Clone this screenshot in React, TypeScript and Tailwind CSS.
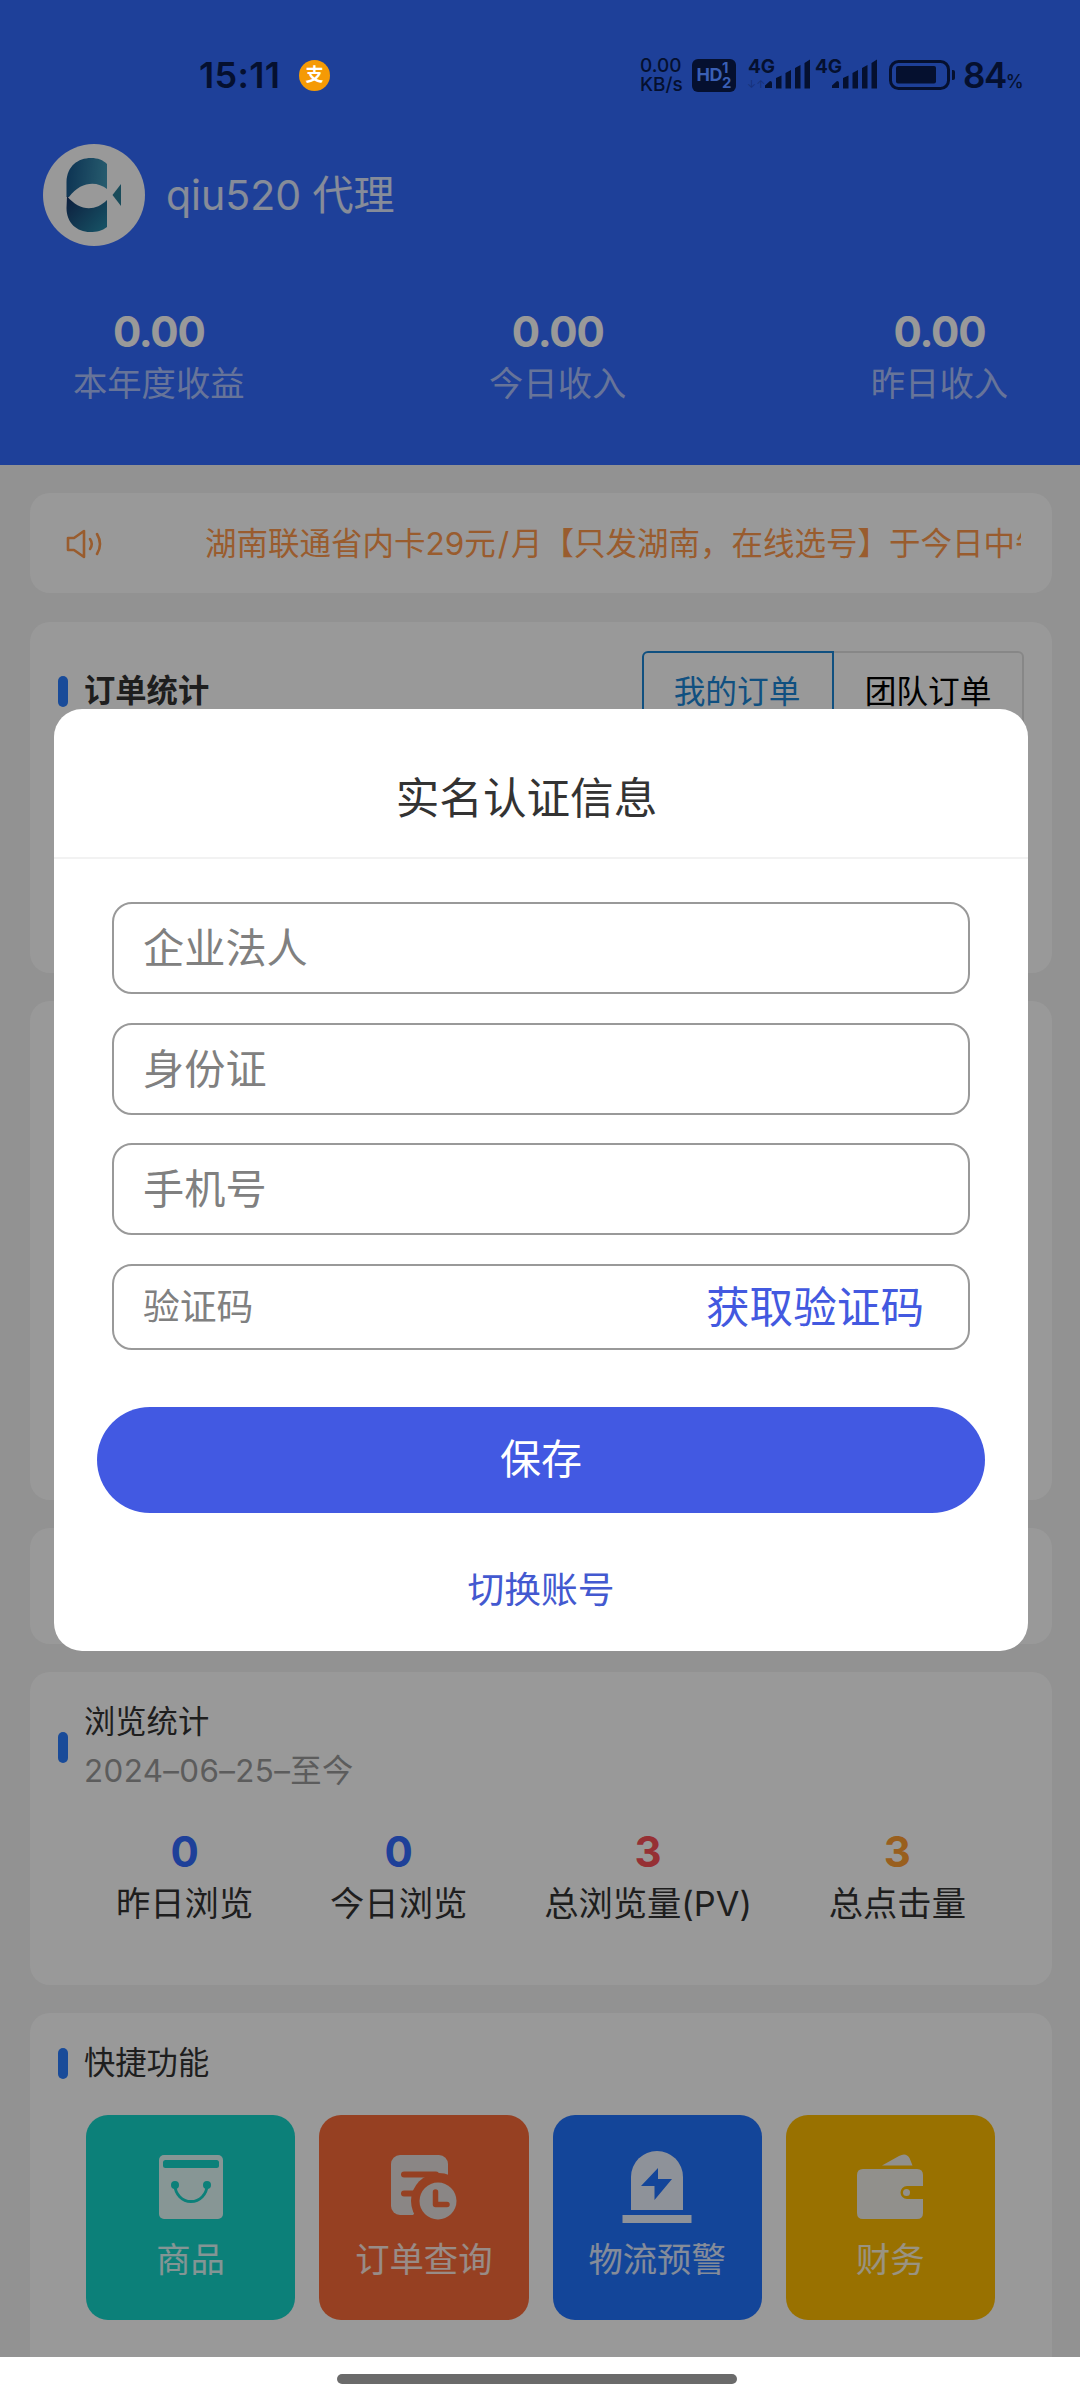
import { ReactNode } from 'react'

const Signal = () => (
  <svg width="48" height="30" viewBox="0 0 48 30" fill="currentColor">
    <path d="M1 29v-2.500l5-4.500q2 0 2 2v5z" />
    <path d="M12 29.500V19l5.500-2.500v13zM21.500 29.500V14l5.500-3v18.500zM31 29.500V9l5.500-3v23.500zM40.500 29.500V4l5.500-3.500v29z" />
  </svg>
)

const StatusBar = () => (
  <div className="absolute left-0 top-0 z-30 flex h-[150px] w-full items-center justify-between pl-[199px] pr-[56px] text-[#05102f]">
    <div className="flex items-center">
      <span className="w-[100px] text-[36px] font-semibold leading-none tracking-[0.3px]">15:11</span>
      <div className="flex h-[31px] w-[31px] items-center justify-center rounded-full bg-[#f59a05] text-[18px] font-bold leading-none text-white">支</div>
    </div>
    <div className="flex items-center">
      <div className="flex w-[52px] flex-col text-[19px] font-medium leading-[19px]">
        <span>0.00</span>
        <span>KB/s</span>
      </div>
      <div className="flex h-[33px] w-[44px] items-center justify-center rounded-[6px] bg-[#05102f] text-[#3a5fb4]">
        <span className="text-[18px] font-bold leading-none tracking-[-0.5px]">HD</span>
        <div className="flex flex-col text-[15px] font-bold leading-[15px]">
          <span>1</span>
          <span>2</span>
        </div>
      </div>
      <div className="relative ml-[28px] h-[32px] w-[48px]">
        <span className="absolute -left-[16px] -top-[2px] text-[19px] font-bold leading-none">4G</span>
        <span className="absolute -left-[17px] top-[20px] text-[11px] leading-none text-[#16317a]">↓↑</span>
        <Signal />
      </div>
      <div className="relative ml-[19px] h-[32px] w-[48px]">
        <span className="absolute -left-[16px] -top-[2px] text-[19px] font-bold leading-none">4G</span>
        <Signal />
      </div>
      <svg className="ml-[10px]" width="68" height="30" viewBox="0 0 68 30">
        <rect x="1.5" y="1.5" width="58" height="27" rx="8" fill="none" stroke="currentColor" strokeWidth="3" />
        <rect x="7" y="6" width="40" height="17.5" rx="2" fill="currentColor" />
        <path d="M63 10h1q2 0 2 2v6q0 2 -2 2H63z" fill="currentColor" />
      </svg>
      <div className="ml-[6px] flex w-[61px] items-baseline">
        <span className="text-[35px] font-semibold leading-none tracking-[-1.5px]">84</span>
        <span className="text-[18px] font-medium leading-none">%</span>
      </div>
    </div>
  </div>
)

const Avatar = () => (
  <svg width="102" height="102" viewBox="0 0 102 102">
    <defs>
      <linearGradient id="top" x1="0" y1="0.4" x2="1" y2="0.5">
        <stop offset="0" stopColor="#17578b" />
        <stop offset="1" stopColor="#4199b8" />
      </linearGradient>
      <linearGradient id="bottom" x1="0" y1="0" x2="1" y2="0.8">
        <stop offset="0" stopColor="#163266" />
        <stop offset="1" stopColor="#2586a6" />
      </linearGradient>
    </defs>
    <circle cx="51" cy="51" r="51" fill="#fff" />
    <path d="M23.500 53V38C24 22 35 14 48 14c7 0 12 2 16 6v25C54 37 38 37 26 53z" fill="url(#top)" />
    <path d="M24 52c12 15 28 16 40 4v27c-5 4-10 5-17 5C34 88 23.500 79 23.500 64z" fill="url(#bottom)" />
    <path d="M78 40v22L69.500 51z" fill="#2b7d97" />
  </svg>
)

const earnings = [
  { value: '0.00', label: '本年度收益' },
  { value: '0.00', label: '今日收入' },
  { value: '0.00', label: '昨日收入' },
]

const Header = () => (
  <div className="h-[465px] bg-[#336bff] pt-[144px] text-white">
    <div className="flex items-center pl-[43px]">
      <Avatar />
      <p className="ml-[21px] whitespace-nowrap text-[41px] leading-[60px] text-white/85">qiu520 代理</p>
    </div>
    <div className="mt-[59px] flex justify-between pl-[73px] pr-[72px]">
      {earnings.map((item) => (
        <div key={item.label} className="flex flex-col items-center">
          <span className="text-[42px] font-bold leading-[54px] tracking-[-1.2px]">{item.value}</span>
          <span className="text-[34.3px] leading-[50px] text-white/60">{item.label}</span>
        </div>
      ))}
    </div>
  </div>
)

const Title = ({ children, bold }: { children: ReactNode; bold?: boolean }) => (
  <div className="flex items-center">
    <div className="h-[31px] w-[10px] rounded-full bg-[#2a7eff]" />
    <div className={bold ? 'ml-[16px] text-[31.3px] font-bold leading-[50px]' : 'ml-[16px] text-[31.3px] leading-[49px]'}>{children}</div>
  </div>
)

const Notice = () => (
  <div className="mt-[28px] flex h-[100px] items-center rounded-[20px] bg-white pl-[36px] pr-[31px] pt-[2px] text-[#ff9a4d]">
    <svg width="38" height="30" viewBox="0 0 38 30" fill="none" stroke="currentColor" strokeWidth="2.600" strokeLinejoin="round" strokeLinecap="round">
      <path d="M2 9h6L18 2v26L8 21H2z" />
      <path d="M24 10q3.500 5 0 10" />
      <path d="M31 5q6 10 0 20" />
    </svg>
    <div className="ml-[101px] flex-1 overflow-hidden whitespace-nowrap text-[31.5px] leading-[50px]">
      湖南联通省内卡29元<span className="px-[2px]">/</span>月【只发湖南，在线选号】于今日中午
    </div>
  </div>
)

const views = [
  { value: 0, label: '昨日浏览', color: 'text-[#336bff]' },
  { value: 0, label: '今日浏览', color: 'text-[#336bff]' },
  { value: 3, label: '总浏览量(PV)', color: 'text-[#fa5058]' },
  { value: 3, label: '总点击量', color: 'text-[#ff9f32]' },
]

const GoodsIcon = () => (
  <svg width="64" height="64" viewBox="0 0 64 64">
    <rect width="64" height="64" rx="5" fill="#fff" fillOpacity=".88" />
    <rect x="4" y="5" width="56" height="8" rx="2.500" fill="#15d5ca" />
    <circle cx="16" cy="30" r="4" fill="#15d5ca" />
    <circle cx="48" cy="30" r="4" fill="#15d5ca" />
    <path d="M16 30a16 16.500 0 0 0 32 0" fill="none" stroke="#15d5ca" strokeWidth="2.800" />
  </svg>
)

const OrderIcon = () => (
  <svg width="66" height="66" viewBox="0 0 66 66">
    <rect x="0" y="1" width="57" height="60" rx="9" fill="#e6e0de" />
    <circle cx="48" cy="47" r="28" fill="#fb6c39" />
    <path d="M57 22h9v44H22v-5z" fill="#fb6c39" />
    <path d="M13 20.500h32M13 39.500h10" stroke="#fb6c39" strokeWidth="6" strokeLinecap="round" />
    <circle cx="47" cy="47" r="18.500" fill="#e6e0de" />
    <path d="M44.500 38v12.500H56" fill="none" stroke="#fb6c39" strokeWidth="5.500" strokeLinecap="round" strokeLinejoin="round" />
  </svg>
)

const AlarmIcon = () => (
  <svg width="70" height="72" viewBox="0 0 70 72">
    <path d="M9 59V26a26 26 0 0 1 52 0v33z" fill="#fff" fillOpacity=".92" />
    <path d="M36 17L19 35h13.500v14L50 28H36z" fill="#2173ff" />
    <rect x="0.500" y="64" width="69" height="8" fill="#fff" fillOpacity=".92" />
  </svg>
)

const WalletIcon = () => (
  <svg width="66" height="66" viewBox="0 0 66 66" fill="#f2f0ea">
    <path d="M25 11.500L42 2q7-4 10.500 2l3 7.500z" />
    <path d="M6 15h54q6 0 6 6v11H50a6.500 6.500 0 0 0 0 13h16v14q0 6 -6 6H6q-6 0-6-6V21q0-6 6-6z" />
    <circle cx="49.500" cy="38.500" r="3.500" />
  </svg>
)

const shortcuts = [
  { label: '商品', bg: 'bg-[#15d5ca]', icon: <GoodsIcon /> },
  { label: '订单查询', bg: 'bg-[#fb6c39]', icon: <OrderIcon /> },
  { label: '物流预警', bg: 'bg-[#2173ff]', icon: <AlarmIcon /> },
  { label: '财务', bg: 'bg-[#ffbd00]', icon: <WalletIcon /> },
]

const Dashboard = () => (
  <div className="flex h-[1892px] flex-col bg-[#f4f4f4] pl-[30px] pr-[28px] text-[#333]">
    <Notice />

    <div className="mt-[29px] flex h-[351px] items-start justify-between rounded-[20px] bg-white pl-[28px] pr-[28px] pt-[29px]">
      <div className="pt-[15px]">
        <Title bold>订单统计</Title>
      </div>
      <div className="flex h-[82px] text-[31.7px] text-black">
        <div className="flex w-[192px] items-center justify-center rounded-l-[6px] border-[2.5px] border-[#1b86d6] pr-[2px] text-[#1b86d6]">我的订单</div>
        <div className="flex w-[190px] items-center justify-center rounded-r-[6px] border-2 border-l-0 border-[#e2e2e2]">团队订单</div>
      </div>
    </div>

    <div className="mt-[28px] h-[499px] rounded-[20px] bg-white" />
    <div className="mt-[28px] h-[116px] rounded-[20px] bg-white" />

    <div className="mt-[28px] h-[313px] rounded-[20px] bg-white pl-[28px] pt-[26px]">
      <Title>
        <p>浏览统计</p>
        <p className="tracking-[0.4px] text-[#999]">2024–06–25–至今</p>
      </Title>
      <div className="mt-[29px] flex justify-between pl-[58px] pr-[86px]">
        {views.map((v) => (
          <div key={v.label} className="flex flex-col items-center">
            <span className={`text-[42px] font-bold leading-[54px] ${v.color}`}>{v.value}</span>
            <span className="text-[34.3px] leading-[50px]">{v.label}</span>
          </div>
        ))}
      </div>
    </div>

    <div className="mt-[28px] flex-1 rounded-t-[20px] bg-white pl-[28px] pt-[26px]">
      <Title>快捷功能</Title>
      <div className="mt-[27px] grid w-[937px] grid-cols-4 gap-[24px] pl-[28px]">
        {shortcuts.map((s) => (
          <div key={s.label} className={`flex h-[205px] flex-col items-center rounded-[22px] pt-[36px] ${s.bg}`}>
            <div className="flex h-[72px] items-center justify-center">{s.icon}</div>
            <span className="mt-[12px] text-[34.3px] leading-[50px] text-white/85">{s.label}</span>
          </div>
        ))}
      </div>
    </div>
  </div>
)

const fields = ['企业法人', '身份证', '手机号']

const AuthModal = () => (
  <div className="absolute left-[54px] top-[709px] z-20 h-[942px] w-[974px] rounded-[28px] bg-white">
    <h1 className="h-[150px] border-b-2 border-[#f2f2f2] pr-[29px] pt-[60px] text-center text-[43.6px] leading-[60px] text-[#333]">实名认证信息</h1>
    <form className="flex flex-col px-[58px] pt-[43px]" onSubmit={(e) => e.preventDefault()}>
      <div className="flex flex-col gap-[28.500px]">
        {fields.map((name) => (
          <input
            key={name}
            placeholder={name}
            className="h-[92px] w-full rounded-[20px] border-2 border-[#999] pl-[29px] text-[41.2px] placeholder-[#808080] outline-none"
          />
        ))}
        <div className="flex h-[86px] items-center justify-between rounded-[20px] border-2 border-[#999] pl-[29px] pr-[44px]">
          <input placeholder="验证码" className="w-[400px] text-[36.8px] placeholder-[#808080] outline-none" />
          <button type="button" className="pt-[2px] text-[43.6px] leading-none text-[#4359e0]">获取验证码</button>
        </div>
      </div>
      <button type="submit" className="-mx-[15px] mt-[57px] h-[106px] rounded-full bg-[#4259e2] text-[41px] text-white">保存</button>
      <button type="button" className="mt-[52px] text-[36.8px] leading-[50px] text-[#4359d0]">切换账号</button>
    </form>
  </div>
)

export default function App() {
  return (
    <div className="relative h-[2400px] w-[1080px] overflow-hidden bg-white font-['Inter','Noto_Sans_CJK_SC',sans-serif]">
      <StatusBar />
      <Header />
      <Dashboard />
      <div className="absolute left-0 top-0 z-10 h-[2357px] w-full bg-black/40" />
      <AuthModal />
      <div className="flex h-[43px] justify-center pr-[6px] pt-[17px]">
        <div className="h-[10px] w-[400px] rounded-full bg-[#6b6b6b]" />
      </div>
    </div>
  )
}
